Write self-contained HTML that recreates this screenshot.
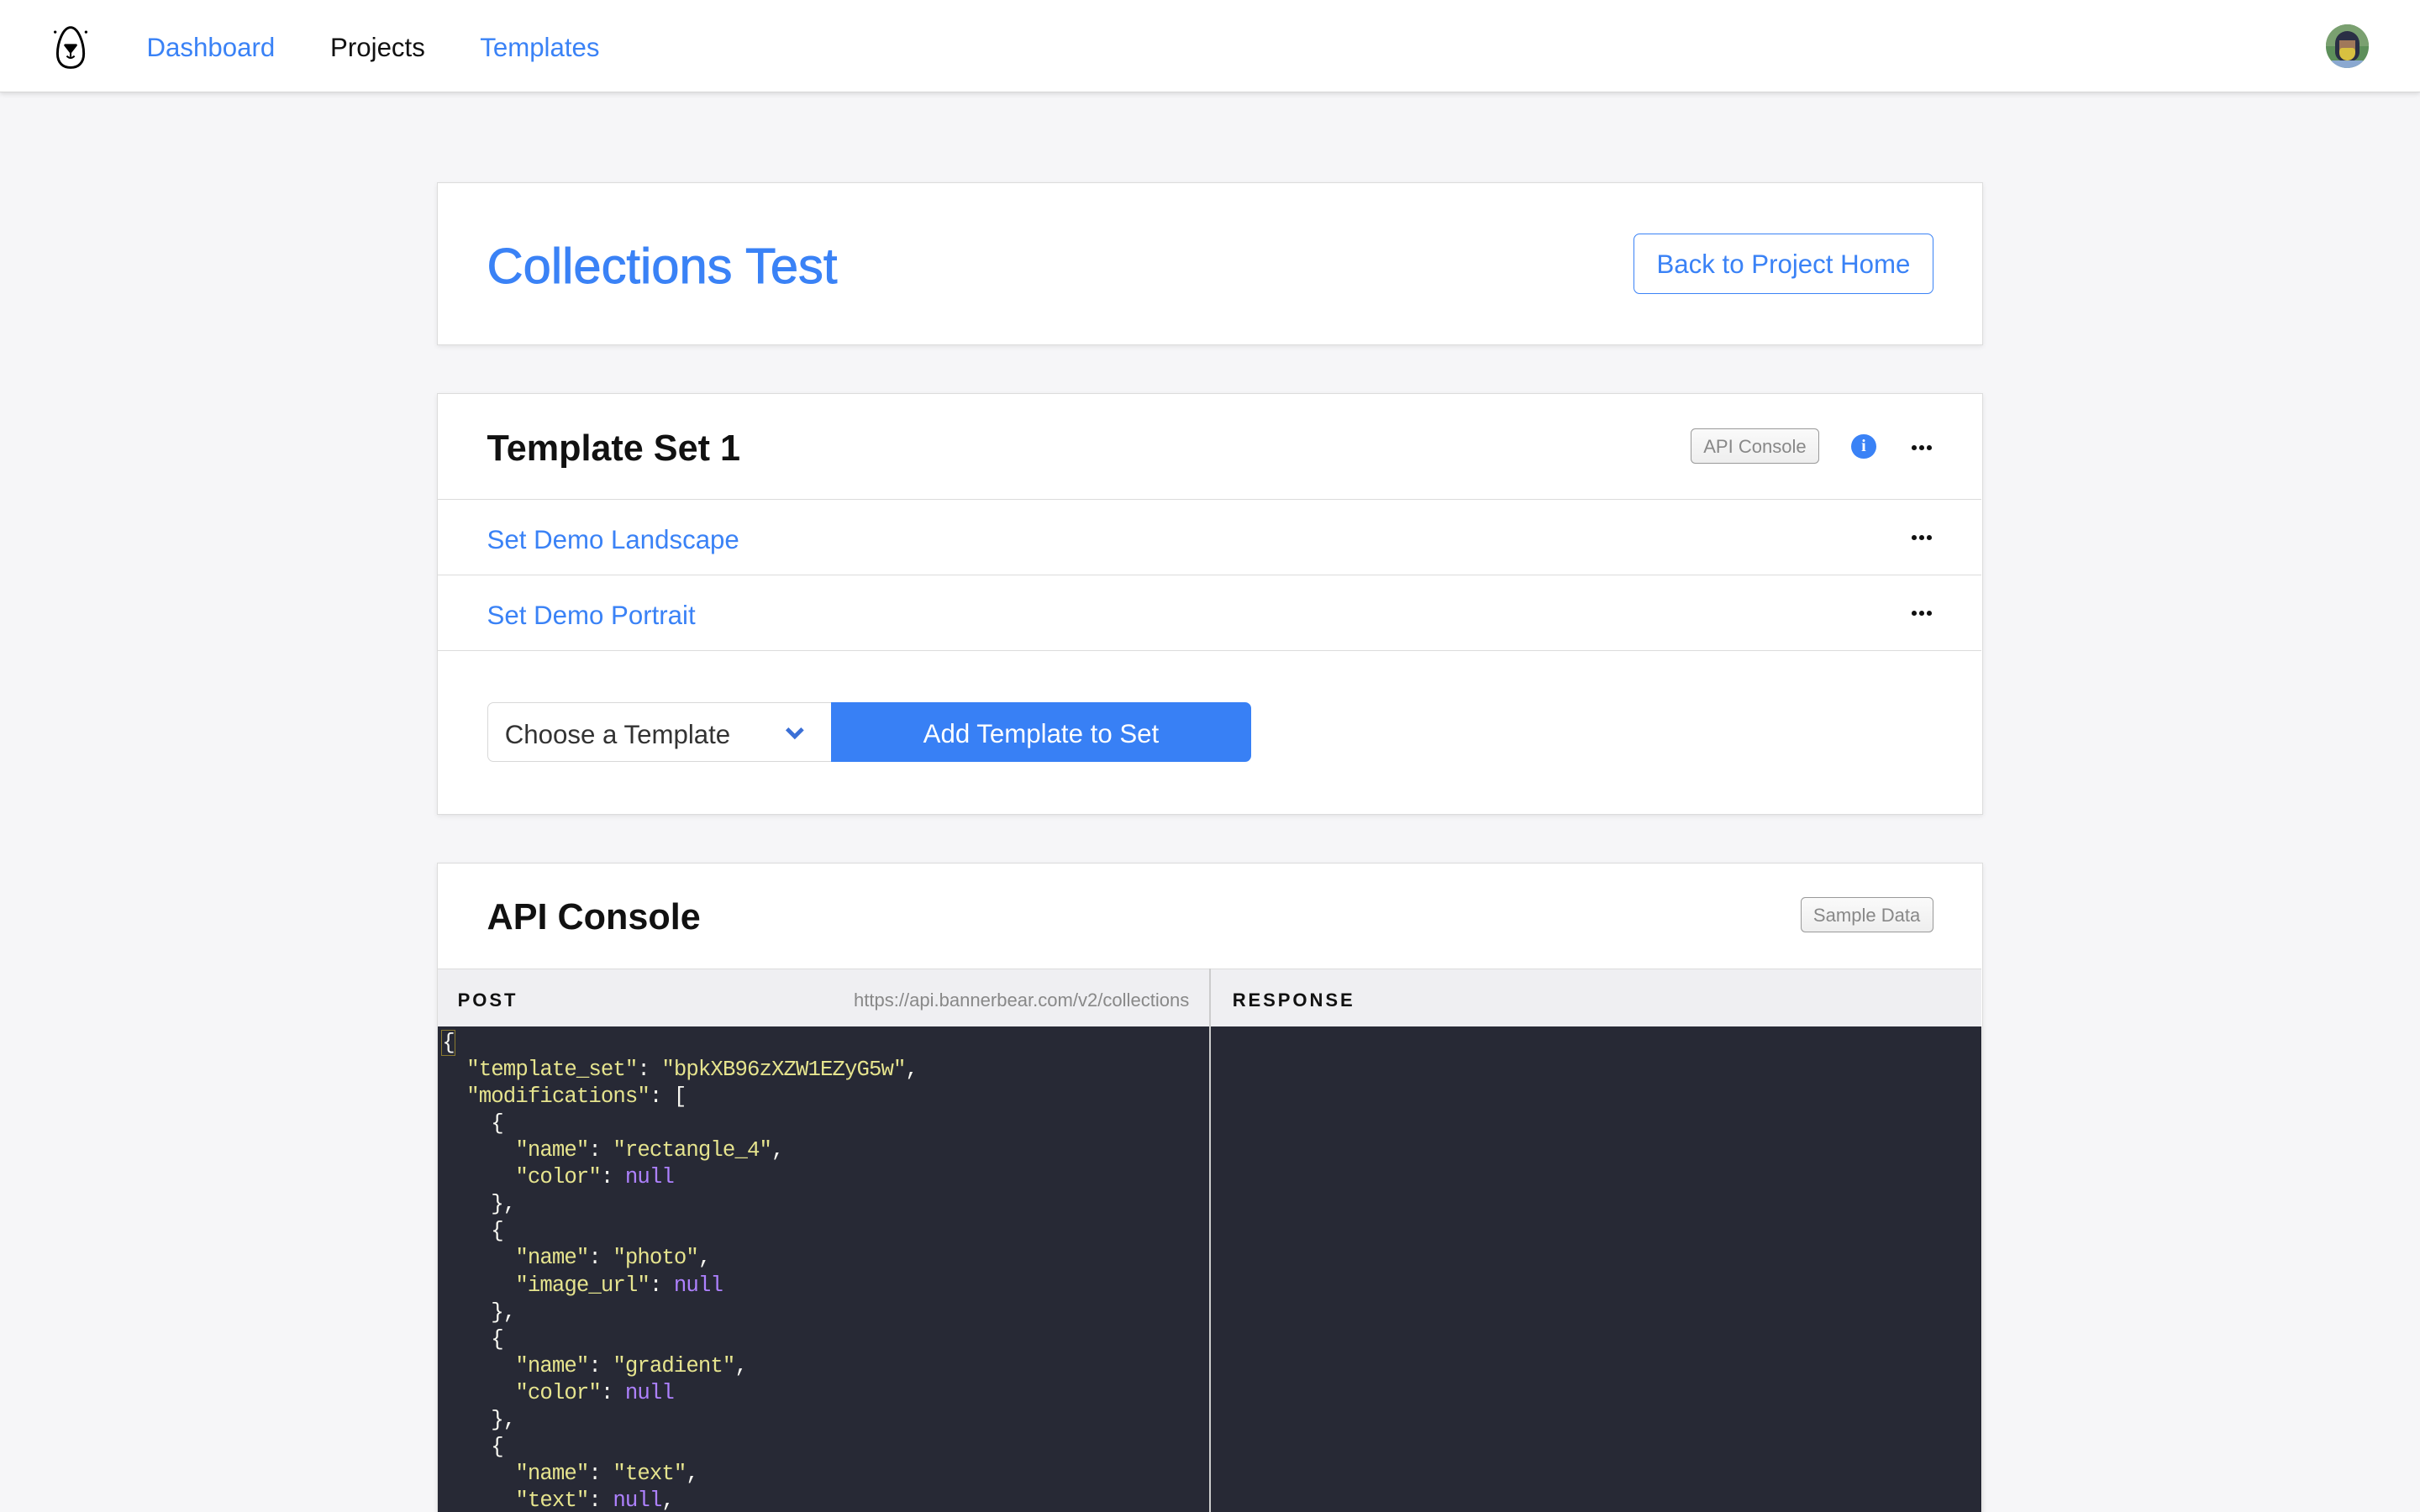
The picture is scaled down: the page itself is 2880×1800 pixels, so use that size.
<!DOCTYPE html>
<html><head><meta charset="utf-8"><style>
html{zoom:1.836735;overflow:hidden;height:980px}
*{box-sizing:border-box;margin:0;padding:0}
body{width:1568px;height:980px;overflow:hidden;background:#f6f6f8;font-family:"Liberation Sans",sans-serif;position:relative}
.abs{position:absolute}
.nav{left:0;top:0;width:1568px;height:60px;background:#fff;border-bottom:1px solid #d8d8d8;box-shadow:0 1px 3px rgba(0,0,0,.12)}
.nav a{position:absolute;top:21px;font-size:17px;color:#3a82f6;text-decoration:none}
.card{position:absolute;left:283px;width:1002px;background:#fff;border:1px solid #dcdcdc;box-shadow:0 1px 3px rgba(0,0,0,.08)}
.blue{color:#3a82f6}
.h2{font-size:23.5px;font-weight:700;color:#111;position:absolute;left:32px}
.row{position:absolute;left:0;width:1000px;border-top:1px solid #dcdcdc}
.dots{position:absolute;width:14px;height:4px}
.dots i{position:absolute;top:0;width:3.2px;height:3.2px;border-radius:50%;background:#111}
.gbtn{position:absolute;height:23px;border:1px solid #999;border-radius:3px;background:linear-gradient(#fafafa,#eee);font-size:12px;color:#888;text-align:center;line-height:21px}
pre{font-family:"Liberation Mono",monospace;font-size:14px;letter-spacing:-.5px;line-height:17.45px;color:#e6e48e}
.n{color:#ae81ff}.w{color:#f8f8f2}
</style></head><body>
<div class="abs nav">
<svg class="abs" style="left:34px;top:16px" width="24" height="30" viewBox="0 0 24 30"><path d="M12 2C7 2 3.5 12 3.5 19C3.5 25 7 28 12 28C17 28 20.5 25 20.5 19C20.5 12 17 2 12 2Z" fill="none" stroke="#000" stroke-width="1.6"/><path d="M8.5 13.5H15.5L12 18Z" fill="#000" stroke="#000" stroke-width="1.5" stroke-linejoin="round"/><path d="M12 18V21M9.5 20.5Q12 23 14.5 20.5" fill="none" stroke="#000" stroke-width="1.1"/><circle cx="2" cy="5" r=".9"/><circle cx="22" cy="5" r=".9"/></svg>
<a style="left:95px">Dashboard</a><a style="left:214px;color:#111">Projects</a><a style="left:311px">Templates</a>
<div class="abs" style="left:1507px;top:16px;width:28px;height:28px;border-radius:50%;overflow:hidden;background:#5d8f5a">
<div class="abs" style="left:0;top:0;width:28px;height:14px;background:#7aa070"></div>
<div class="abs" style="left:6px;top:4px;width:16px;height:20px;border-radius:8px 8px 6px 6px;background:#2a2f45"></div>
<div class="abs" style="left:9px;top:10px;width:10px;height:6px;background:#a0785a"></div>
<div class="abs" style="left:9px;top:15px;width:10px;height:8px;background:#d8c040;border-radius:2px 2px 5px 5px"></div>
<div class="abs" style="left:4px;top:23px;width:20px;height:6px;background:#8aa8d0"></div>
</div>
</div>

<div class="card" style="top:118px;height:106px">
<div class="abs blue" style="left:32px;top:35px;font-size:32.5px;-webkit-text-stroke:.5px #3a82f6">Collections Test</div>
<div class="abs blue" style="left:775px;top:33px;width:194px;height:39px;border:1px solid #3a82f6;border-radius:4px;font-size:17px;text-align:center;line-height:39px">Back to Project Home</div>
</div>

<div class="card" style="top:255px;height:273px">
<div class="h2" style="top:22px">Template Set 1</div>
<div class="gbtn" style="left:812px;top:22px;width:83px;line-height:23px">API Console</div>
<div class="abs" style="left:916px;top:26px;width:16px;height:16px;border-radius:50%;background:#3a82f6;color:#fff;font-size:11px;font-weight:700;text-align:center;line-height:16px;font-family:'Liberation Serif',serif">i</div>
<div class="dots" style="left:955px;top:33px"><i style="left:0"></i><i style="left:5px"></i><i style="left:10px"></i></div>
<div class="row" style="top:68px;height:49px"><div class="abs blue" style="left:32px;top:16px;font-size:17px">Set Demo Landscape</div><div class="dots" style="left:955px;top:23px"><i style="left:0"></i><i style="left:5px"></i><i style="left:10px"></i></div></div>
<div class="row" style="top:117px;height:49px"><div class="abs blue" style="left:32px;top:16px;font-size:17px">Set Demo Portrait</div><div class="dots" style="left:955px;top:23px"><i style="left:0"></i><i style="left:5px"></i><i style="left:10px"></i></div></div>
<div class="row" style="top:166px;height:106px">
<div class="abs" style="left:32px;top:33px;width:224px;height:39px;border:1px solid #d8d8d8;border-right:none;border-radius:4px 0 0 4px;font-size:17px;color:#333;padding:11px 0 0 11px">Choose a Template
<svg class="abs" style="left:192px;top:15px" width="14" height="10" viewBox="0 0 14 10"><path d="M2 2L7 7L12 2" fill="none" stroke="#3a6fd6" stroke-width="2.6"/></svg></div>
<div class="abs" style="left:255px;top:33px;width:272px;height:39px;background:#3880f5;border-radius:0 4px 4px 0;color:#fff;font-size:17px;text-align:center;line-height:41px">Add Template to Set</div>
</div>
</div>

<div class="card" style="top:559px;height:425px">
<div class="h2" style="top:22px">API Console</div>
<div class="gbtn" style="left:883px;top:22px;width:86px;line-height:23px">Sample Data</div>
<div class="abs" style="left:0;top:68px;width:1000px;height:38px;background:#efeff2;border-top:1px solid #dcdcdc"></div>
<div class="abs" style="left:13px;top:82px;font-size:12px;font-weight:700;letter-spacing:1.6px;color:#111">POST</div>
<div class="abs" style="left:200px;width:287px;text-align:right;top:82px;font-size:12px;color:#888">https://api.bannerbear.com/v2/collections</div>
<div class="abs" style="left:515px;top:82px;font-size:12px;font-weight:700;letter-spacing:1.6px;color:#111">RESPONSE</div>
<div class="abs" style="left:0;top:106px;width:1000px;height:340px;background:#272935"></div>
<div class="abs" style="left:500px;top:68px;width:1px;height:380px;background:#ccc"></div>
<pre class="abs" style="left:3px;top:108px"><span class="w" style="outline:1px solid #8a7a30">{</span>
  "template_set"<span class="w">:</span> "bpkXB96zXZW1EZyG5w"<span class="w">,</span>
  "modifications"<span class="w">: [</span>
<span class="w">    {</span>
      "name"<span class="w">:</span> "rectangle_4"<span class="w">,</span>
      "color"<span class="w">:</span> <span class="n">null</span>
<span class="w">    },
    {</span>
      "name"<span class="w">:</span> "photo"<span class="w">,</span>
      "image_url"<span class="w">:</span> <span class="n">null</span>
<span class="w">    },
    {</span>
      "name"<span class="w">:</span> "gradient"<span class="w">,</span>
      "color"<span class="w">:</span> <span class="n">null</span>
<span class="w">    },
    {</span>
      "name"<span class="w">:</span> "text"<span class="w">,</span>
      "text"<span class="w">:</span> <span class="n">null</span><span class="w">,</span></pre>
</div>
</body></html>
